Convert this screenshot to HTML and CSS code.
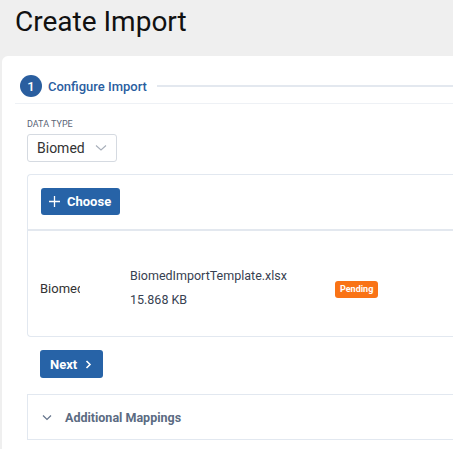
FILE: index.html
```html
<!DOCTYPE html>
<html lang="en">
<head>
    <meta charset="UTF-8">
    <meta name="viewport" content="width=device-width, initial-scale=1.0">
    <title>Create Import</title>
    <link rel="stylesheet" href="styles.css">
</head>
<body>
    <h1 class="page-title">Create Import</h1>
    <div class="card">
        <!-- Step header -->
        <div class="step-header">
            <span class="step-number">1</span>
            <span class="step-title">Configure Import</span>
            <span class="step-line"></span>
        </div>
        <div class="step-body">
            <label class="field-label">DATA TYPE</label>
            <div class="select">
                <span>Biomed</span>
                <svg class="select-arrow" width="12" height="8" viewBox="0 0 12 8"><path d="M1 1.5 L6 6 L11 1.5" fill="none" stroke="#a8afba" stroke-width="1.1"/></svg>
            </div>
            <!-- Upload panel -->
            <div class="upload">
                <div class="upload-bar">
                    <button class="btn">
                        <svg width="11" height="11" viewBox="0 0 11 11"><path d="M5.5 0 V11 M0 5.5 H11" stroke="#fff" stroke-width="1.3"/></svg>
                        Choose
                    </button>
                </div>
                <div class="upload-row">
                    <div class="file-type">Biomed</div>
                    <div class="file-info">
                        <div class="file-name">BiomedImportTemplate.xlsx</div>
                        <div class="file-size">15.868 KB</div>
                    </div>
                    <span class="badge">Pending</span>
                </div>
            </div>
            <button class="btn btn-next">
                Next
                <svg width="7" height="9" viewBox="0 0 7 9"><path d="M1.5 1 L5 4.5 L1.5 8" fill="none" stroke="#fff" stroke-width="1.6"/></svg>
            </button>
            <div class="accordion">
                <svg width="10" height="7" viewBox="0 0 10 7"><path d="M1 1.5 L5 5.5 L9 1.5" fill="none" stroke="#64748b" stroke-width="1.2"/></svg>
                <span>Additional Mappings</span>
            </div>
        </div>
    </div>
</body>
</html>
```

FILE: styles.css
```css
/* General styles */
body {
    font-family: Roboto, "Liberation Sans", sans-serif;
    margin: 0;
    padding: 0;
    background-color: #efefef;
    color: #374151;
    overflow: hidden;
}
.page-title {
    margin: 0;
    padding: 5px 15px 0;
    font-size: 28px;
    font-weight: 400;
    line-height: 34px;
    color: #111;
}
.card {
    margin: 17px 0 0 2px;
    background-color: white;
    border-radius: 6px 0 0 0;
    padding-left: 13px;
    padding-bottom: 20px;
}
/* Step header */
.step-header {
    display: flex;
    align-items: center;
    padding: 19px 0 6px 5px;
    border-bottom: 1px solid #eef1f5;
}
.step-number {
    width: 22px;
    height: 22px;
    border-radius: 50%;
    background-color: #2a5e9f;
    color: white;
    font-size: 13px;
    font-weight: 500;
    display: flex;
    align-items: center;
    justify-content: center;
}
.step-title {
    margin-left: 6px;
    font-size: 13px;
    font-weight: 500;
    color: #2a5e9f;
}
.step-line {
    flex: 1;
    height: 2px;
    margin-left: 10px;
    background-color: #e3e8ef;
}
.step-body {
    padding-left: 12px;
}
.field-label {
    display: block;
    margin-top: 15px;
    font-size: 9px;
    line-height: 11px;
    color: #5a6577;
}
.select {
    margin-top: 4px;
    height: 26px;
    border: 1px solid #d5dae1;
    border-radius: 3px;
    display: flex;
    align-items: center;
    justify-content: space-between;
    padding: 0 9px 0 9px;
    width: 70px;
    font-size: 14px;
    color: #333;
}
/* Upload panel */
.upload {
    margin-top: 12px;
    border: 1px solid #e2e8f0;
    border-right: none;
    border-radius: 4px 0 0 4px;
}
.upload-bar {
    padding: 13px 13px 14px;
    border-bottom: 2px solid #e3e8ef;
}
.btn {
    display: inline-flex;
    align-items: center;
    gap: 7px;
    height: 27px;
    padding: 0 9px 0 8px;
    border: none;
    border-radius: 3px;
    background-color: #2763a7;
    color: white;
    font-family: inherit;
    font-size: 13px;
    font-weight: 700;
    cursor: pointer;
}
.upload-row {
    display: flex;
    align-items: center;
    box-sizing: border-box;
    height: 105px;
    padding: 10px 0 0 12px;
    font-size: 12.5px;
}
.file-type {
    width: 40px;
    overflow: hidden;
    white-space: nowrap;
    font-size: 13px;
    color: #333;
}
.file-info {
    margin-left: 50px;
    width: 205px;
    color: #374151;
}
.file-name {
    margin-top: -2px;
}
.file-size {
    margin-top: 9px;
}
.badge {
    margin-top: 1px;
    height: 17px;
    line-height: 17px;
    padding: 0 5px;
    border-radius: 3px;
    background-color: #f97316;
    color: white;
    font-size: 9px;
    font-weight: 700;
}
.btn-next {
    margin: 13px 0 0 13px;
    height: 28px;
    padding: 0 11px 0 10px;
    gap: 8px;
}
.accordion {
    margin-top: 16px;
    height: 44px;
    border: 1px solid #e2e8f0;
    border-right: none;
    display: flex;
    align-items: center;
    padding-left: 14px;
    gap: 13px;
    font-size: 12.5px;
    font-weight: 700;
    color: #5b6b82;
}
```
